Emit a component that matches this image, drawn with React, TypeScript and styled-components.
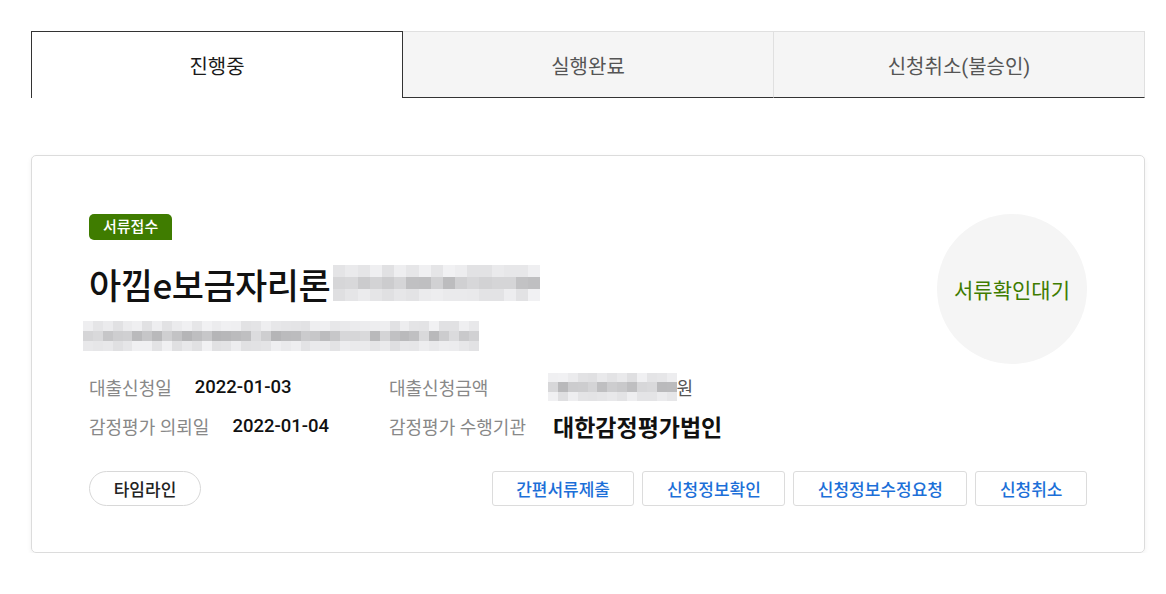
import React from "react";
import styled, { createGlobalStyle } from "styled-components";

const GlobalStyle = createGlobalStyle`
  * { box-sizing: border-box; }
  body {
    margin: 0;
    background: #fff;
    font-family: Roboto, "Noto Sans CJK KR", "Noto Sans", sans-serif;
    color: #222;
  }
`;

const tabs = ["진행중", "실행완료", "신청취소(불승인)"];
const actions = ["간편서류제출", "신청정보확인", "신청정보수정요청", "신청취소"];

// masked (pixelated) personal data
const Mosaic = ({ cols, rows, cell, h, seed }: { cols: number; rows: number; cell: number; h: number; seed: number }) => {
  const cells = [];
  for (let r = 0; r < rows; r++) {
    for (let c = 0; c < cols; c++) {
      const n = Math.abs(Math.sin((r + 1) * 12.9898 + (c + 1) * 78.233 + seed) * 43758.5453) % 1;
      const mid = r === Math.floor(rows / 2);
      const base = mid ? 200 : 232;
      const v = Math.round(base + (n - 0.5) * (mid ? 40 : 18));
      cells.push(<MosaicCell key={`${r}-${c}`} style={{ background: `rgb(${v},${v},${v + 2})` }} />);
    }
  }
  return (
    <MosaicGrid $cols={cols} $cell={cell} $h={h / rows}>
      {cells}
    </MosaicGrid>
  );
};

export default function App() {
  return (
    <>
      <GlobalStyle />
      <Page>
        <TabList>
          {tabs.map((t, i) => (
            <Tab key={t} $active={i === 0}>
              {t}
            </Tab>
          ))}
        </TabList>

        <Card>
          <Main>
            <Badge>서류접수</Badge>
            <TitleRow>
              <Title>아낌e보금자리론</Title>
              <Mosaic cols={17} rows={3} cell={12.2} h={36} seed={1} />
            </TitleRow>
            <SubLine>
              <Mosaic cols={40} rows={3} cell={9.9} h={30} seed={7} />
            </SubLine>
            <InfoGrid>
              <InfoItem>
                <Label>대출신청일</Label>
                <Value>2022-01-03</Value>
              </InfoItem>
              <InfoItem $wide>
                <Label>대출신청금액</Label>
                <Amount>
                  <Mosaic cols={13} rows={3} cell={9.9} h={28} seed={3} />
                  <Won>원</Won>
                </Amount>
              </InfoItem>
              <InfoItem>
                <Label>감정평가 의뢰일</Label>
                <Value>2022-01-04</Value>
              </InfoItem>
              <InfoItem $wide>
                <Label>감정평가 수행기관</Label>
                <Value $large>대한감정평가법인</Value>
              </InfoItem>
            </InfoGrid>
          </Main>
          <Status>서류확인대기</Status>
          <Footer>
            <PillButton>타임라인</PillButton>
            <ActionGroup>
              {actions.map((a) => (
                <ActionButton key={a}>{a}</ActionButton>
              ))}
            </ActionGroup>
          </Footer>
        </Card>
      </Page>
    </>
  );
}

const Page = styled.div`
  padding: 31px 21px 0 31px;
  width: 1166px;
`;

const TabList = styled.div`
  display: grid;
  grid-template-columns: 372px 371px 371px;
  height: 67px;
`;

const Tab = styled.div<{ $active?: boolean }>`
  display: flex;
  align-items: center;
  justify-content: center;
  font-size: 20px;
  font-weight: 400;
  color: ${(p) => (p.$active ? "#1a1a1a" : "#555")};
  background: ${(p) => (p.$active ? "#fff" : "#f5f5f5")};
  border-top: 1px solid ${(p) => (p.$active ? "#333" : "#e0e0e0")};
  border-bottom: ${(p) => (p.$active ? "none" : "1px solid #333")};
  border-left: ${(p) => (p.$active ? "1px solid #333" : "none")};
  border-right: 1px solid ${(p) => (p.$active ? "#333" : "#e0e0e0")};
  padding-top: 1px;
`;

const Card = styled.div`
  margin-top: 57px;
  width: 1114px;
  border: 1px solid #dcdcdc;
  border-radius: 5px;
  box-shadow: 0 2px 5px rgba(0, 0, 0, 0.06);
  padding: 58px 57px 46px 57px;
  display: grid;
  grid-template-columns: 1fr 150px;
`;

const Main = styled.div`
  display: flex;
  flex-direction: column;
  align-items: flex-start;
`;

const Badge = styled.span`
  display: inline-block;
  background: #3f7c00;
  color: #fff;
  font-size: 15px;
  font-weight: 500;
  height: 26px;
  line-height: 26px;
  padding: 0 14px;
  border-radius: 5px 5px 0 5px;
`;

const TitleRow = styled.div`
  display: flex;
  align-items: center;
  gap: 3px;
  margin-top: 20px;
  height: 46px;
`;

const Title = styled.h2`
  margin: 0;
  font-size: 35px;
  font-weight: 500;
  color: #111;
  font-family: "Noto Sans CJK KR", sans-serif;
  letter-spacing: -0.5px;
`;

const MosaicGrid = styled.span<{ $cols: number; $cell: number; $h: number }>`
  display: inline-grid;
  grid-template-columns: repeat(${(p) => p.$cols}, ${(p) => p.$cell}px);
  grid-auto-rows: ${(p) => p.$h}px;
  filter: blur(0.6px);
`;

const MosaicCell = styled.span`
  display: block;
`;

const SubLine = styled.div`
  margin-top: 15px;
  margin-left: -6px;
  height: 30px;
  display: flex;
  align-items: center;
`;

const InfoGrid = styled.div`
  margin-top: 22px;
  display: grid;
  grid-template-columns: 300px auto;
  row-gap: 11px;
`;

const InfoItem = styled.div<{ $wide?: boolean }>`
  display: flex;
  align-items: center;
  gap: ${(p) => (p.$wide ? "0" : "23px")};
  height: 28px;

  & > span:first-child {
    min-width: ${(p) => (p.$wide ? "159px" : "0")};
  }
`;

const Label = styled.span`
  font-size: 18px;
  color: #888;
`;

const Value = styled.span<{ $large?: boolean }>`
  font-size: ${(p) => (p.$large ? "23px" : "18.5px")};
  font-weight: ${(p) => (p.$large ? 700 : 500)};
  color: #111;
  font-family: ${(p) => (p.$large ? '"Noto Sans CJK KR", sans-serif' : "inherit")};
  margin-left: ${(p) => (p.$large ? "5px" : "0")};
`;

const Amount = styled.span`
  display: flex;
  align-items: center;
`;

const Won = styled.span`
  font-size: 18px;
  color: #555;
`;

const Status = styled.div`
  width: 150px;
  height: 150px;
  border-radius: 50%;
  background: #f5f5f5;
  color: #3f7c00;
  font-size: 21px;
  display: flex;
  align-items: center;
  justify-content: center;
`;

const Footer = styled.div`
  grid-column: 1 / -1;
  margin-top: 31px;
  display: flex;
  justify-content: space-between;
  align-items: center;
`;

const PillButton = styled.button`
  width: 112px;
  height: 35px;
  border: 1px solid #d8d8d8;
  border-radius: 18px;
  background: #fff;
  font-family: inherit;
  font-size: 17px;
  font-weight: 500;
  color: #222;
  padding: 0;
`;

const ActionGroup = styled.div`
  display: flex;
  gap: 8px;
`;

const ActionButton = styled.button`
  height: 35px;
  padding: 0 23.5px;
  border: 1px solid #dcdcdc;
  border-radius: 3px;
  background: #fff;
  font-family: inherit;
  font-size: 17px;
  font-weight: 500;
  color: #1c6fd8;
`;
